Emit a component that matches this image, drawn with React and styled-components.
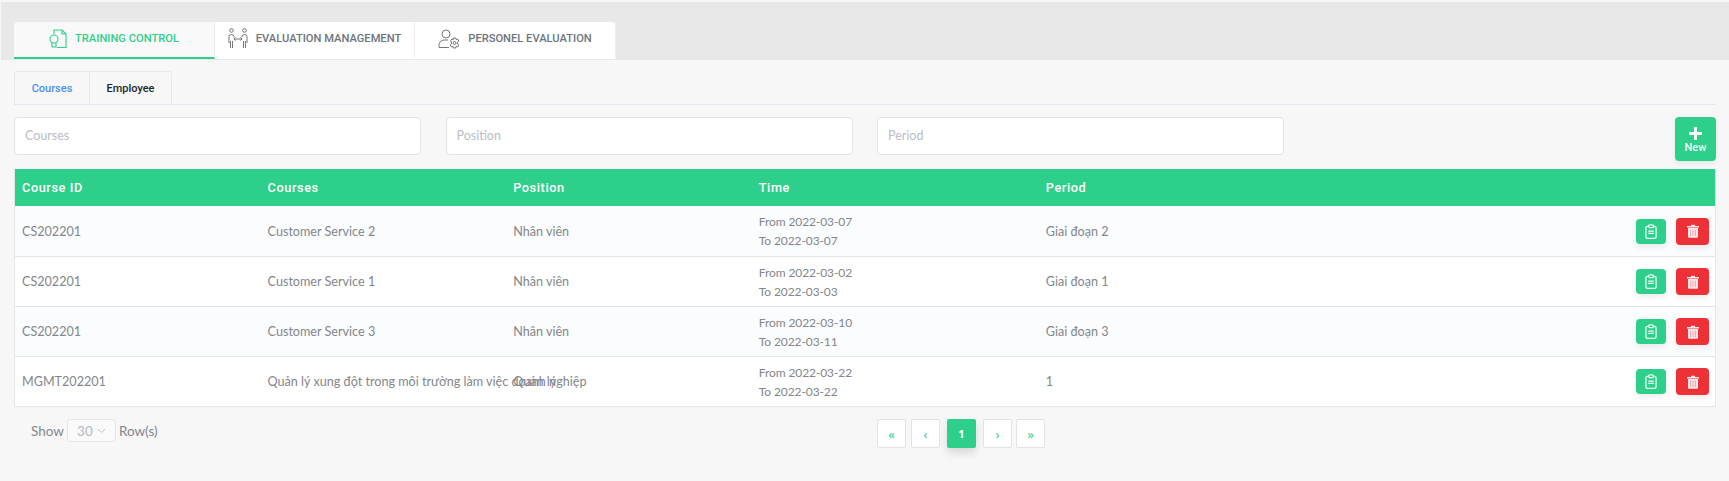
import React from "react";
import styled, { createGlobalStyle } from "styled-components";

const GREEN = "#2ecf8b";
const RED = "#ee3136";
const BODY = 'Lato, "Noto Sans", sans-serif';

const Global = createGlobalStyle`
  html, body { margin: 0; padding: 0; background: #f7f7f7; }
  * { box-sizing: border-box; }
`;

const Page = styled.div`
  width: 1729px;
  height: 481px;
  overflow: hidden;
  padding: 2px 0 0 1px;
  background: #f7f7f7;
  font-family: ${BODY};
`;

const TopBand = styled.div`
  height: 58px;
  padding: 20px 0 0 13px;
  background: #e8e8e8;
  display: flex;
  align-items: flex-start;
`;

const MainTab = styled.div`
  width: ${(p) => p.$w}px;
  height: 37px;
  display: flex;
  align-items: center;
  justify-content: center;
  gap: 8px;
  padding-bottom: 2px;
  background: ${(p) => (p.$active ? "#f9f9f9" : "#fff")};
  border-bottom: 2px solid ${(p) => (p.$active ? GREEN : "transparent")};
  border-right: 1px solid #ececec;
  border-radius: ${(p) => p.$radius || "0"};
  color: ${(p) => (p.$active ? GREEN : "#6c757d")};
  font: 500 11.15px Roboto, sans-serif;
  text-transform: uppercase;
  svg { flex: none; }
`;

const Content = styled.div`
  padding: 0 13px 0 13px;
`;

const SubTabs = styled.div`
  margin-top: 11px;
  height: 34px;
  display: flex;
  border-bottom: 1px solid #e3e6ee;
`;

const SubTab = styled.div`
  width: ${(p) => p.$w}px;
  height: 33px;
  display: flex;
  align-items: center;
  justify-content: center;
  border: 1px solid #e6e8ee;
  border-bottom: none;
  border-left: ${(p) => (p.$first ? "1px solid #e6e8ee" : "none")};
  border-radius: ${(p) => p.$radius};
  color: ${(p) => (p.$active ? "#4a90f5" : "#22262b")};
  font: 500 11px Roboto, sans-serif;
`;

const Filters = styled.div`
  margin-top: 12px;
  display: flex;
  align-items: flex-start;
  gap: 24.5px;
`;

const Field = styled.input`
  width: 407px;
  height: 38px;
  padding: 0 10px 1px;
  background: #fff;
  border: 1px solid #e2e4e8;
  border-radius: 4px;
  outline: none;
  font: 400 12.5px ${BODY};
  &::placeholder { color: #b9bdc6; opacity: 1; }
`;

const NewButton = styled.button`
  margin-left: auto;
  width: 41px;
  height: 44px;
  padding: 2px 0 0;
  display: flex;
  flex-direction: column;
  align-items: center;
  justify-content: center;
  gap: 1px;
  background: ${GREEN};
  border: none;
  border-radius: 4px;
  color: #eafff5;
  font: 500 11px Roboto, sans-serif;
  box-shadow: 0 2px 5px rgba(0, 0, 0, 0.08);
`;

const Table = styled.div`
  margin-top: 8px;
  width: 1702px;
  border-right: 1px solid #e3e6ea;
  border-left: 1px solid #e3e6ea;
  border-bottom: 1px solid #e3e6ea;
`;

const Row = styled.div`
  display: grid;
  grid-template-columns: 245.6px 245.6px 245.6px 287px 1fr auto;
  align-items: center;
  padding: 0 6px 0 7px;
  height: ${(p) => (p.$head ? "37px" : "50px")};
  background: ${(p) => (p.$head ? GREEN : p.$odd ? "#fbfcfe" : "#fff")};
  color: ${(p) => (p.$head ? "#fff" : "#83868b")};
  border-top: ${(p) => (p.$divided ? "1px solid #e3e6ea" : "none")};
  font: ${(p) => (p.$head ? "500 12.7px Roboto, sans-serif" : `400 12.6px ${BODY}`)};
  letter-spacing: ${(p) => (p.$head ? "0.6px" : "0")};
`;

const Cell = styled.div`
  white-space: nowrap;
  line-height: 19px;
`;

const TimeCell = styled(Cell)`
  font-size: 12px;
  letter-spacing: -0.1px;
`;

const Actions = styled.div`
  display: flex;
  align-items: center;
  gap: 10px;
`;

const ActionButton = styled.button`
  width: ${(p) => (p.$danger ? 33 : 30)}px;
  height: ${(p) => (p.$danger ? 27 : 25)}px;
  padding: 0;
  display: flex;
  align-items: center;
  justify-content: center;
  background: ${(p) => (p.$danger ? RED : GREEN)};
  border: none;
  border-radius: 4px;
  box-shadow: 0 3px 6px rgba(0, 0, 0, 0.08);
`;

const Footer = styled.div`
  margin-top: 12px;
  height: 30px;
  display: flex;
  align-items: flex-start;
`;

const RowsControl = styled.div`
  width: 148px;
  margin-left: 17px;
  display: flex;
  align-items: center;
  gap: 3px;
  color: #83868b;
  font: 400 13.5px ${BODY};
  height: 23px;
`;

const RowsSelect = styled.div`
  width: 49px;
  height: 23px;
  display: flex;
  align-items: center;
  justify-content: center;
  gap: 4px;
  background: #fafafa;
  border: 1px solid #e6e6e6;
  border-radius: 3px;
  color: #b5b8bc;
`;

const Pager = styled.div`
  margin-left: 698px;
  display: flex;
  align-items: center;
`;

const PageButton = styled.div`
  width: 29px;
  height: 29px;
  margin-right: ${(p) => p.$gap}px;
  display: flex;
  align-items: center;
  justify-content: center;
  padding-bottom: ${(p) => (p.$current ? "1px" : "0")};
  background: ${(p) => (p.$current ? GREEN : "#fff")};
  border: ${(p) => (p.$current ? "none" : "1px solid #e3e3e3")};
  border-radius: 2px;
  color: ${(p) => (p.$current ? "#fff" : GREEN)};
  font: ${(p) => (p.$current ? "700 11px" : "400 13px")} "Noto Sans", sans-serif;
  box-shadow: ${(p) => (p.$current ? "0 5px 8px rgba(0,0,0,0.13)" : "none")};
`;

const TrainingIcon = () => (
  <svg width="18" height="20" viewBox="0 0 18 20" fill="none" stroke={GREEN} strokeWidth="1.1">
    <path d="M5 5V1h8l4 4v13.5H8" />
    <path d="M13 1v4h4" />
    <circle cx="5" cy="10" r="4" />
    <path d="M3 13.5V18h4v-4.5" />
  </svg>
);

const EvaluationIcon = () => (
  <svg width="20" height="21" viewBox="0 0 20 21" fill="none" stroke="#666" strokeWidth="0.9">
    <circle cx="3.5" cy="2.5" r="1.8" />
    <circle cx="16.5" cy="2.5" r="1.8" />
    <path d="M1 15V8.5Q1 6.5 3.5 6.5T6 8.5v1M19 15V8.5q0-2-2.5-2T14 8.5v1M2.5 20v-7M4.5 20v-7M15.5 20v-7M17.5 20v-7" />
    <path d="M6 11h8M7.5 9.5 6 11l1.5 1.5M12.5 9.5 14 11l-1.5 1.5" />
  </svg>
);

const PersonelIcon = () => (
  <svg width="22" height="20" viewBox="0 0 22 20" fill="none" stroke="#666" strokeWidth="0.9">
    <circle cx="8" cy="5" r="4" />
    <path d="M1 18.5v-2Q1 11.5 6 11h4M1 18.5h10" />
    <circle cx="16.5" cy="14" r="1.5" />
    <path d="M15.3 9h2.4l.4 1.6 1.5-.6 1.2 2-1.2 1.1v1.8l1.2 1.1-1.2 2-1.5-.6-.4 1.6h-2.4l-.4-1.6-1.5.6-1.2-2 1.2-1.1v-1.8L12.6 12l1.2-2 1.5.6z" />
  </svg>
);

const PlusIcon = () => (
  <svg width="13" height="13" viewBox="0 0 13 13" fill="#fff">
    <path d="M5 0h3v5h5v3H8v5H5V8H0V5h5z" />
  </svg>
);

const ClipboardIcon = () => (
  <svg width="12" height="15" viewBox="0 0 13 16" fill="none" stroke="#e8fff4" strokeWidth="1.4">
    <rect x="1" y="2.5" width="11" height="13" rx="1.5" />
    <rect x="4" y="0.8" width="5" height="3" rx="1" fill={GREEN} />
    <path d="M3.5 7.5h6M3.5 10h6" />
  </svg>
);

const TrashIcon = () => (
  <svg width="12" height="14" viewBox="0 0 12 14">
    <path fill="#ffe9ea" d="M0 2h3.8l.5-1.2h3.4L8.2 2H12v1.4H0zM1 4h10v8.6q0 1.2-1.2 1.2H2.2Q1 13.8 1 12.6z" />
    <path stroke="#f39a9d" strokeWidth="0.9" d="M3.6 5.5v6.6M6 5.5v6.6M8.4 5.5v6.6" />
  </svg>
);

const ChevronIcon = () => (
  <svg width="9" height="6" viewBox="0 0 9 6" fill="none" stroke="#c3c5c9" strokeWidth="1">
    <path d="M1 1l3.5 3.5L8 1" />
  </svg>
);

const courses = [
  { id: "CS202201", name: "Customer Service 2", pos: "Nhân viên", from: "2022-03-07", to: "2022-03-07", period: "Giai đoạn 2" },
  { id: "CS202201", name: "Customer Service 1", pos: "Nhân viên", from: "2022-03-02", to: "2022-03-03", period: "Giai đoạn 1" },
  { id: "CS202201", name: "Customer Service 3", pos: "Nhân viên", from: "2022-03-10", to: "2022-03-11", period: "Giai đoạn 3" },
  { id: "MGMT202201", name: "Quản lý xung đột trong môi trường làm việc doanh nghiệp", pos: "Quản lý", from: "2022-03-22", to: "2022-03-22", period: "1" },
];

export default function App() {
  return (
    <Page>
      <Global />
      <TopBand>
        <MainTab $w={201} $active $radius="4px 0 0 0"><TrainingIcon />Training Control</MainTab>
        <MainTab $w={200}><EvaluationIcon />Evaluation Management</MainTab>
        <MainTab $w={201} $radius="0 4px 0 0"><PersonelIcon />Personel Evaluation</MainTab>
      </TopBand>
      <Content>
        <SubTabs>
          <SubTab $w={76} $first $active $radius="3px 0 0 0">Courses</SubTab>
          <SubTab $w={82} $radius="0 3px 0 0">Employee</SubTab>
        </SubTabs>
        <Filters>
          <Field placeholder="Courses" />
          <Field placeholder="Position" />
          <Field placeholder="Period" />
          <NewButton><PlusIcon />New</NewButton>
        </Filters>
        <Table>
          <Row $head>
            <Cell>Course ID</Cell>
            <Cell>Courses</Cell>
            <Cell>Position</Cell>
            <Cell>Time</Cell>
            <Cell>Period</Cell>
          </Row>
          {courses.map((c, i) => (
            <Row key={c.name} $odd={i % 2 === 0} $divided={i > 0}>
              <Cell>{c.id}</Cell>
              <Cell>{c.name}</Cell>
              <Cell>{c.pos}</Cell>
              <TimeCell>From {c.from}<br />To {c.to}</TimeCell>
              <Cell>{c.period}</Cell>
              <Actions>
                <ActionButton><ClipboardIcon /></ActionButton>
                <ActionButton $danger><TrashIcon /></ActionButton>
              </Actions>
            </Row>
          ))}
        </Table>
        <Footer>
          <RowsControl>
            Show
            <RowsSelect>30 <ChevronIcon /></RowsSelect>
            Row(s)
          </RowsControl>
          <Pager>
            <PageButton $gap={5}>«</PageButton>
            <PageButton $gap={7}>‹</PageButton>
            <PageButton $gap={7} $current>1</PageButton>
            <PageButton $gap={4}>›</PageButton>
            <PageButton $gap={0}>»</PageButton>
          </Pager>
        </Footer>
      </Content>
    </Page>
  );
}
